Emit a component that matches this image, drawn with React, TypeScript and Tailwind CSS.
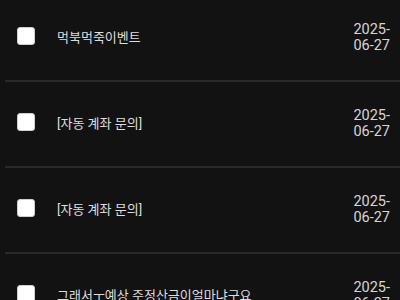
import React from "react";

const rows = [
  "먹북먹죽이벤트",
  "[자동 계좌 문의]",
  "[자동 계좌 문의]",
  "그래서ㅜ예상 주정산금이얼마냐구요",
];

export default function App() {
  return (
    <div
      className="w-[400px] h-[300px] overflow-hidden bg-[#121212] text-[#dedede]"
      style={{ fontFamily: "Roboto, 'Noto Sans CJK KR', sans-serif" }}
    >
      <div className="-mt-[4px]">
        {rows.map((t, i) => (
          <div key={i} className="ml-[5px] border-b-2 border-[#2a2a2a]">
            <div className="flex items-center h-[84px] pl-[12px] pr-[10px] pb-[4px]">
              <div className="w-[18px] h-[18px] shrink-0 rounded-[3px] bg-white border border-[#cfcfcf]" />
              <div className="ml-[22px] mt-[3px] flex-1 text-[13px] leading-[18px]">{t}</div>
              <div className="text-[14.5px] leading-[16px] mt-[3px] whitespace-nowrap ml-2 text-[#d6d6d6]">
                2025-
                <br />
                06-27
              </div>
            </div>
          </div>
        ))}
      </div>
    </div>
  );
}
